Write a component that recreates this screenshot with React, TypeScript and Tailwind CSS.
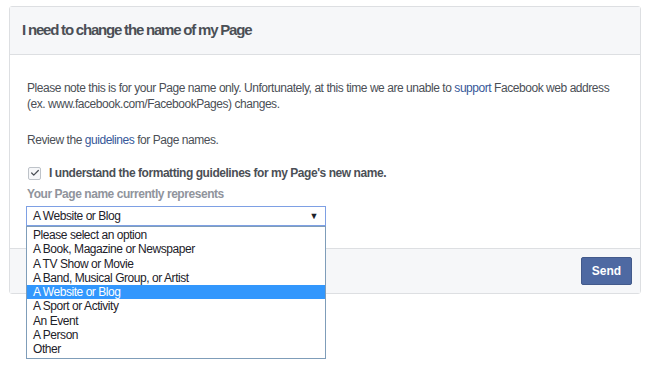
import { Check } from 'lucide-react'

const options = [
  'Please select an option',
  'A Book, Magazine or Newspaper',
  'A TV Show or Movie',
  'A Band, Musical Group, or Artist',
  'A Website or Blog',
  'A Sport or Activity',
  'An Event',
  'A Person',
  'Other',
]

export default function App() {
  const selected = 'A Website or Blog'

  return (
    <div className="min-h-[370px] bg-white pl-[9px] pt-[6px] font-['Liberation_Sans',Arial,sans-serif]">
      <div className="w-[632px] rounded-[3px] border border-[#dddfe2] bg-white">
        <div className="flex h-[48px] items-center border-b border-[#dddfe2] bg-[#f6f7f9] px-[12px]">
          <h1 className="text-[15px] font-bold tracking-[-1.2px] text-[#4b4f56]">I need to change the name of my Page</h1>
        </div>

        <div className="px-[17px] pb-[22px] pt-[25px] text-[12px] leading-[16px] tracking-[-0.45px] text-[#4b4f56]">
          <p>
            Please note this is for your Page name only. Unfortunately, at this time we are unable to{' '}
            <span className="text-[#365899]">support</span> Facebook web address
            <br />
            (ex. www.facebook.com/FacebookPages) changes.
          </p>
          <p className="mt-[20px]">
            Review the <span className="text-[#365899]">guidelines</span> for Page names.
          </p>

          <label className="mt-[17px] flex items-center gap-[8px]">
            <span className="ml-[1px] flex h-[13px] w-[13px] items-center justify-center rounded-[2px] border border-[#bec3c9] bg-[#f6f7f9]">
              <Check className="h-[10px] w-[10px] text-[#4b4f56]" strokeWidth={3} />
            </span>
            <span className="font-bold text-[#4b4f56]">I understand the formatting guidelines for my Page's new name.</span>
          </label>

          <div className="mt-[5px] font-bold text-[#90949c]">Your Page name currently represents</div>

          <div className="relative -ml-[1px] mt-[4px] w-[300px]">
            <div className="flex h-[20px] items-center justify-between border border-[#7ea0e4] pl-[6px] pr-[7px] text-[#1d2129]">
              <span>{selected}</span>
              <span className="text-[9px]">▼</span>
            </div>
            <ul className="absolute left-0 top-[20px] z-10 w-[300px] border border-[#7f9db9] bg-white py-[1px] text-[12px] leading-[14.3px] text-[#1d2129]">
              {options.map((o) => (
                <li
                  key={o}
                  className={o === selected ? 'bg-[#3297fd] pl-[6px] text-white' : 'pl-[6px]'}
                >
                  {o}
                </li>
              ))}
            </ul>
          </div>
        </div>

        <div className="flex h-[45px] items-center justify-end border-t border-[#dddfe2] bg-[#f6f7f9] pr-[8px]">
          <button className="h-[28px] w-[51px] rounded-[2px] border border-[#435a8b] bg-[#4e69a2] text-[12px] font-bold text-white">
            Send
          </button>
        </div>
      </div>
    </div>
  )
}
